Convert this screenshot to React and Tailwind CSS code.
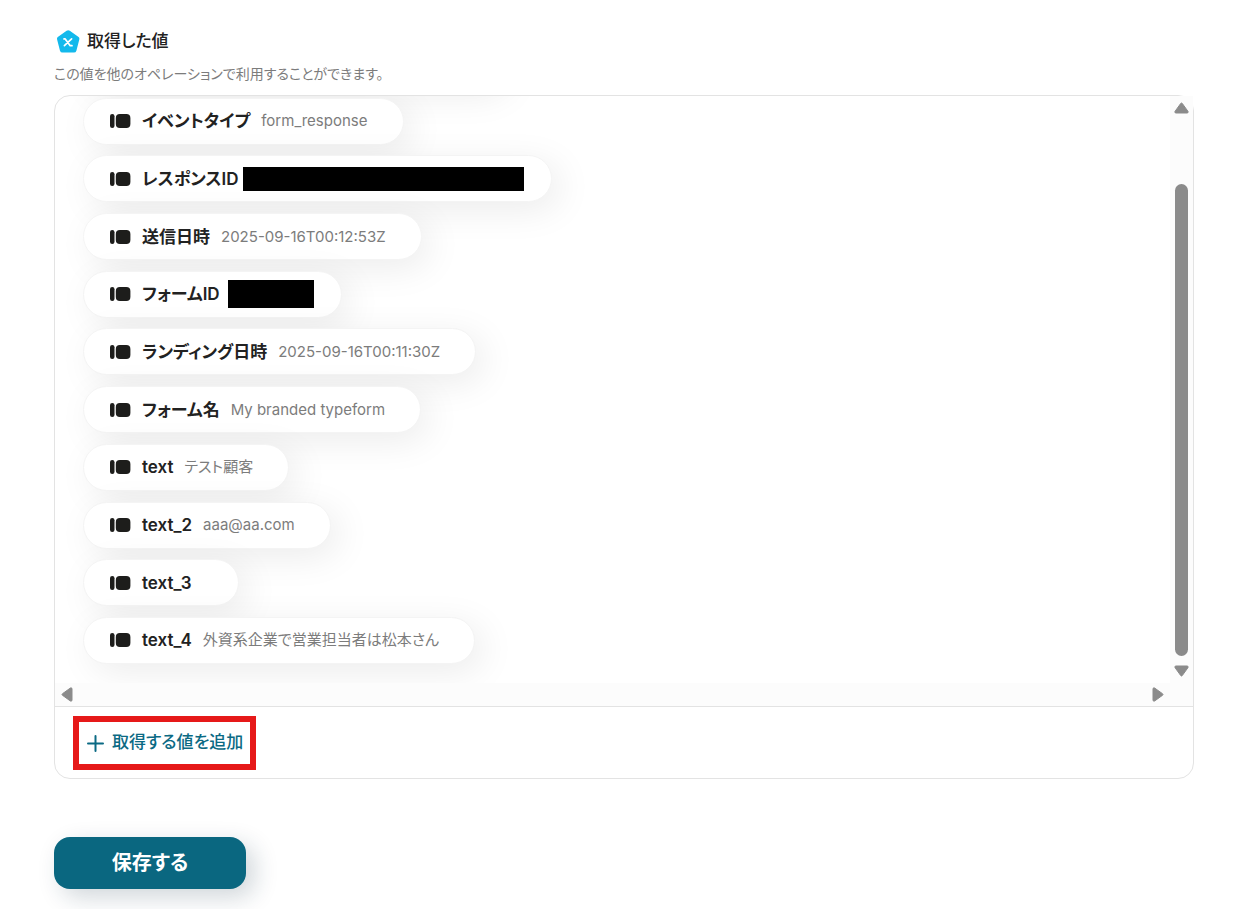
import React from "react";

const rows = [
  { name: "イベントタイプ", value: "form_response" },
  { name: "レスポンスID", mask: "ml-1 h-6 w-[281px]" },
  { name: "送信日時", value: "2025-09-16T00:12:53Z" },
  { name: "フォームID", mask: "ml-2 h-7 w-[86px]" },
  { name: "ランディング日時", value: "2025-09-16T00:11:30Z" },
  { name: "フォーム名", value: "My branded typeform" },
  { name: "text", value: "テスト顧客" },
  { name: "text_2", value: "aaa@aa.com" },
  { name: "text_3", value: "" },
  { name: "text_4", value: "外資系企業で営業担当者は松本さん" },
];

const pill =
  "flex h-[47px] items-center rounded-full border border-[#f4f4f4] bg-white pl-[26px] shadow-[8px_8px_36px_rgba(0,0,0,0.08)]";

function FieldIcon() {
  return (
    <svg className="mr-[11px] shrink-0" width="21" height="14" viewBox="0 0 21 14" fill="#1d1d1b" aria-hidden="true">
      <rect x="0" y="0" width="4.5" height="14" rx="2.2" />
      <rect x="5.8" y="0" width="14.6" height="14" rx="4" />
    </svg>
  );
}

function Row({ name, value, mask }) {
  return (
    <li className={`${pill} ${mask ? "pr-[27px]" : "pr-[35px]"}`}>
      <FieldIcon />
      <span className="text-[17px] leading-6 font-semibold text-[#222]">{name}</span>
      {mask ? (
        <span className={`${mask} bg-black`} />
      ) : (
        <span className="ml-[11px] text-[15px] leading-6 text-[#7c7c7c]">{value}</span>
      )}
    </li>
  );
}

function Arrow({ className }) {
  return (
    <svg className={`shrink-0 ${className}`} width="23" height="23" viewBox="0 0 23 23" aria-hidden="true">
      <path d="M10.7 7.5Q11.5 6.5 12.3 7.5L18 15.4Q18.6 17 17 17H6Q4.4 17 5 15.4Z" fill="#8b8b8b" stroke="#8b8b8b" strokeWidth="1" strokeLinejoin="round" />
    </svg>
  );
}

export default function App() {
  return (
    <main className="pt-[27px] pr-16 pb-5 pl-[54px] font-['Inter','Noto_Sans_CJK_JP',sans-serif] text-[#222] [font-feature-settings:'palt']">
      <header>
        <h1 className="flex items-center gap-[6px] pl-[2px] text-[17px] leading-7 font-medium">
          <svg width="25" height="25" viewBox="0 0 25 25" aria-hidden="true">
            <path d="M10.6 1.7Q12.2.6 13.8 1.7L22.6 8Q23.8 9 23.3 10.4L20.4 21.7Q19.8 23.6 18 23.6H6.4Q4.600 23.6 4 21.7L1.100 10.4Q.6 9 1.800 8Z" fill="#13b9ec" />
            <path d="M8 9.900H9.200L14.200 16.700H16M15.600 9.900 8.400 16.700" fill="none" stroke="#fff" strokeWidth="1.700" strokeLinecap="round" strokeLinejoin="round" />
          </svg>
          取得した値
        </h1>
        <p className="mt-[9px] text-[14px] leading-5 text-[#7c7c7c]">この値を他のオペレーションで利用することができます。</p>
      </header>

      <section className="mt-[11px] rounded-2xl border border-[#e3e3e3] bg-white">
        <div className="flex h-[587px]">
          <div className="flex flex-1 flex-col justify-end overflow-hidden rounded-tl-2xl pb-[19px] pl-7">
            <ul className="flex h-[624px] shrink-0 flex-col items-start justify-between">
              <li className={`${pill} w-[420px]`} aria-hidden="true" />
              {rows.map((row) => (
                <Row key={row.name} {...row} />
              ))}
            </ul>
          </div>
          <div className="flex w-[23px] flex-col items-center bg-[#fcfcfc]">
            <Arrow className="" />
            <div className="mt-[65px] w-[13px] flex-1 rounded-full bg-[#8b8b8b]" />
            <Arrow className="mt-1 rotate-180" />
          </div>
        </div>
        <div className="flex h-[23px] items-center justify-between bg-[#fcfcfc] pr-[23px]">
          <Arrow className="-rotate-90" />
          <Arrow className="rotate-90" />
        </div>
        <footer className="border-t border-[#e3e3e3] px-[18px] pt-[9px] pb-2">
          <button type="button" className="flex h-[54px] items-center gap-2 border-[6px] border-[#e61919] pr-[7px] pl-2 text-[17px] font-medium text-[#0b6a84]">
            <svg width="17" height="17" viewBox="0 0 17 17" fill="none" stroke="#0b6a84" strokeWidth="2" strokeLinecap="round" aria-hidden="true">
              <path d="M8.5 1V16M1 8.5H16" />
            </svg>
            取得する値を追加
          </button>
        </footer>
      </section>

      <button type="button" className="mt-[58px] h-13 w-48 rounded-2xl bg-[#0a6780] text-[20px] font-bold text-white shadow-[8px_8px_24px_rgba(20,50,70,0.2)]">
        保存する
      </button>
    </main>
  );
}
